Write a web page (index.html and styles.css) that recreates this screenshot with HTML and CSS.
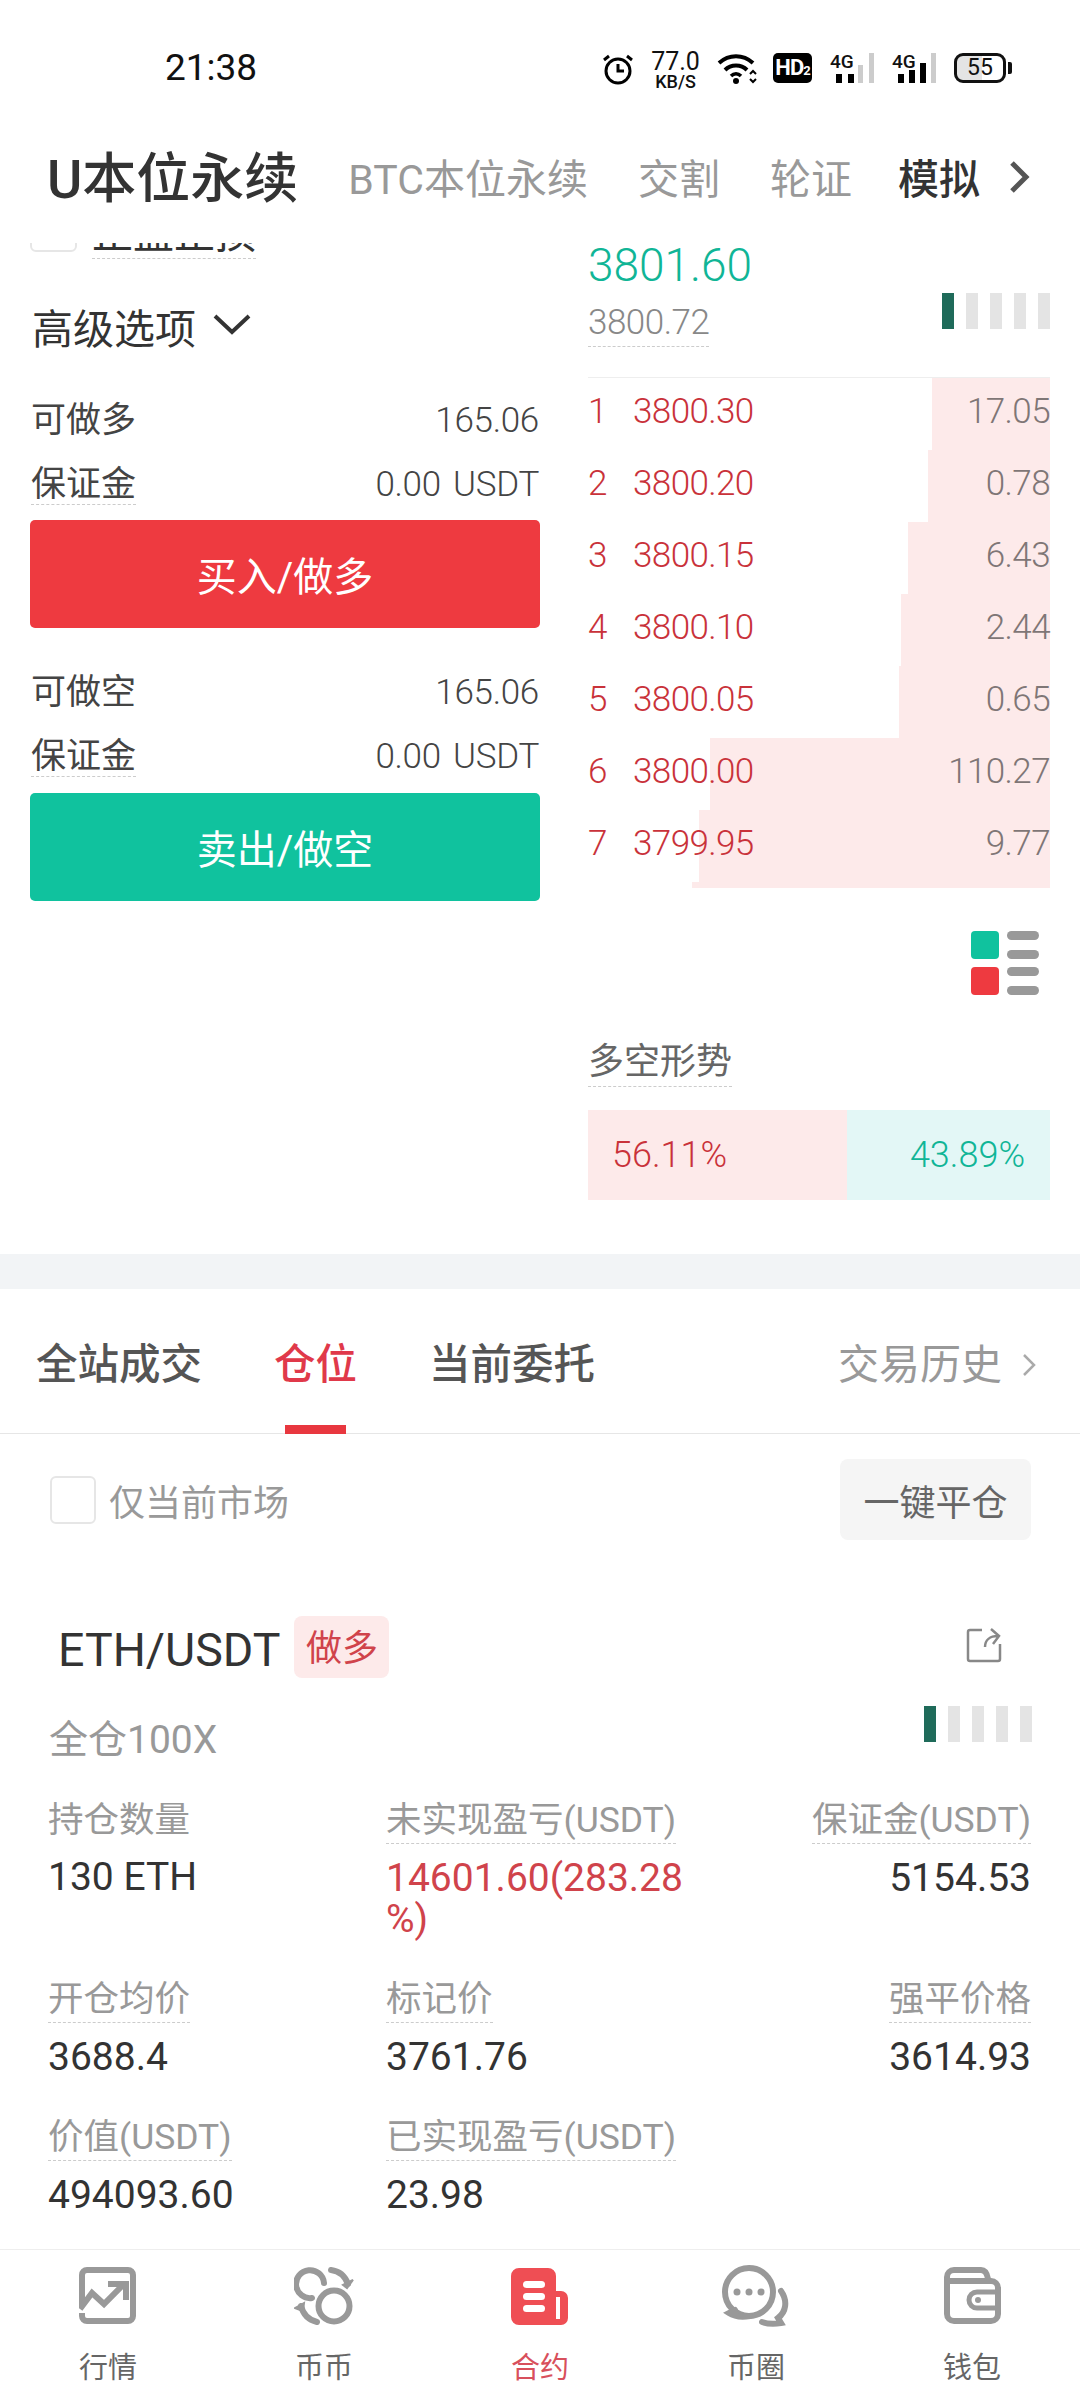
FILE: index.html
```html
<!DOCTYPE html>
<html lang="zh-CN">
<head>
    <meta charset="UTF-8">
    <meta name="viewport" content="width=device-width, initial-scale=1.0">
    <title>U本位永续</title>
    <link rel="stylesheet" href="styles.css">
</head>
<body>
<div class="app">
    <div class="statusbar">
        <span class="clock">21:38</span>
        <div class="status-icons">
            <svg class="ic-alarm" width="32" height="32" viewBox="0 0 32 32">
                <circle cx="16" cy="18" r="12" fill="none" stroke="#000" stroke-width="3"/>
                <path d="M16 11v7h6" fill="none" stroke="#000" stroke-width="3"/>
                <path d="M2 7l5-4M30 7l-5-4" fill="none" stroke="#000" stroke-width="3"/>
            </svg>
            <div class="speed"><span class="speed-num">77.0</span><span class="speed-unit">KB/S</span></div>
            <svg class="ic-wifi" width="42" height="32" viewBox="0 0 42 32">
                <path d="M2 10C12 1 26 1 36 10" fill="none" stroke="#000" stroke-width="4"/>
                <path d="M8 17C14 11 24 11 30 17" fill="none" stroke="#000" stroke-width="4"/>
                <path d="M14 23c3-3 7-3 10 0" fill="none" stroke="#000" stroke-width="3.5"/>
                <circle cx="19" cy="28" r="3" fill="#000"/>
                <path d="M33 21l3-3 3 3M33 26l3 3 3-3" fill="none" stroke="#000" stroke-width="2"/>
            </svg>
            <span class="hd">HD<small>2</small></span>
            <svg class="ic-signal" width="46" height="40" viewBox="0 -8 46 40">
                <text x="0" y="15" class="sig-text">4G</text>
                <rect x="6" y="21" width="6" height="9" fill="#000"/>
                <rect x="18" y="21" width="6" height="9" fill="#000"/>
                <rect x="28" y="12" width="5" height="18" fill="#ccc"/>
                <rect x="39" y="0" width="5" height="30" fill="#ccc"/>
            </svg>
            <svg class="ic-signal" width="46" height="40" viewBox="0 -8 46 40">
                <text x="0" y="15" class="sig-text">4G</text>
                <rect x="6" y="21" width="6" height="9" fill="#000"/>
                <rect x="17" y="17" width="6" height="13" fill="#000"/>
                <rect x="28" y="10" width="6" height="20" fill="#000"/>
                <rect x="39" y="0" width="5" height="30" fill="#ccc"/>
            </svg>
            <div class="battery"><span>55</span></div>
        </div>
    </div>

    <div class="top-tabs">
        <span class="top-tab main">U本位永续</span>
        <span class="top-tab">BTC本位永续</span>
        <span class="top-tab">交割</span>
        <span class="top-tab">轮证</span>
        <span class="top-tab dark">模拟</span>
        <svg class="top-more" width="22" height="34" viewBox="0 0 22 34">
            <path d="M4 3l14 14L4 31" fill="none" stroke="#555" stroke-width="5"/>
        </svg>
    </div>

    <div class="scroll">
        <section class="trade">
            <div class="trade-left">
                <div class="opt-row">
                    <span class="check-small"></span>
                    <span class="dashed opt-text">止盈止损</span>
                </div>
                <div class="advanced">
                    <span>高级选项</span>
                    <svg width="38" height="22" viewBox="0 0 38 22">
                        <path d="M2 3l17 16L36 3" fill="none" stroke="#333" stroke-width="4"/>
                    </svg>
                </div>
                <div class="info-row"><span>可做多</span><span class="num">165.06</span></div>
                <div class="info-row"><span class="dashed">保证金</span><span class="num">0.00 USDT</span></div>
                <button class="action buy">买入/做多</button>
                <div class="info-row second"><span>可做空</span><span class="num">165.06</span></div>
                <div class="info-row"><span class="dashed">保证金</span><span class="num">0.00 USDT</span></div>
                <button class="action sell">卖出/做空</button>
            </div>

            <div class="trade-right">
                <div class="last-price">3801.60</div>
                <div class="mark-row">
                    <span class="dashed mark-price">3800.72</span>
                    <div class="strength"><i class="on"></i><i></i><i></i><i></i><i></i></div>
                </div>
                <div class="book">
                    <div class="book-row"><span class="depth" style="width:118px"></span><span class="idx">1</span><span class="price">3800.30</span><span class="qty">17.05</span></div>
                    <div class="book-row"><span class="depth" style="width:122px"></span><span class="idx">2</span><span class="price">3800.20</span><span class="qty">0.78</span></div>
                    <div class="book-row"><span class="depth" style="width:142px"></span><span class="idx">3</span><span class="price">3800.15</span><span class="qty">6.43</span></div>
                    <div class="book-row"><span class="depth" style="width:149px"></span><span class="idx">4</span><span class="price">3800.10</span><span class="qty">2.44</span></div>
                    <div class="book-row"><span class="depth" style="width:151px"></span><span class="idx">5</span><span class="price">3800.05</span><span class="qty">0.65</span></div>
                    <div class="book-row"><span class="depth" style="width:340px"></span><span class="idx">6</span><span class="price">3800.00</span><span class="qty">110.27</span></div>
                    <div class="book-row"><span class="depth" style="width:351px"></span><span class="idx">7</span><span class="price">3799.95</span><span class="qty">9.77</span></div>
                    <div class="book-tail" style="width:358px"></div>
                </div>
                <div class="legend">
                    <div class="legend-group"><i class="sq green"></i><div class="lines"><b></b><b></b></div></div>
                    <div class="legend-group"><i class="sq red"></i><div class="lines"><b></b><b></b></div></div>
                </div>
                <div class="ratio-title"><span class="dashed">多空形势</span></div>
                <div class="ratio">
                    <span class="ratio-long">56.11%</span>
                    <span class="ratio-short">43.89%</span>
                </div>
            </div>
        </section>

        <div class="band"></div>

        <section class="orders">
            <div class="order-tabs">
                <span class="order-tab">全站成交</span>
                <span class="order-tab active">仓位</span>
                <span class="order-tab">当前委托</span>
                <span class="history">交易历史
                    <svg width="18" height="26" viewBox="0 0 18 26"><path d="M4 3l10 10L4 23" fill="none" stroke="#aaa" stroke-width="2.5"/></svg>
                </span>
            </div>

            <div class="filter">
                <span class="check"></span>
                <span class="filter-text">仅当前市场</span>
                <button class="close-all">一键平仓</button>
            </div>

            <div class="pos-head">
                <span class="symbol">ETH/USDT</span>
                <span class="side-tag">做多</span>
                <svg class="share" width="38" height="36" viewBox="0 0 38 36">
                    <path d="M17 3H5a2 2 0 0 0-2 2v27a2 2 0 0 0 2 2h28a2 2 0 0 0 2-2V17" fill="none" stroke="#888" stroke-width="2.5"/>
                    <path d="M20 20c0-7 5-11 13-11M26 2l8 7-6 8" fill="none" stroke="#888" stroke-width="2.5"/>
                </svg>
            </div>
            <div class="pos-sub">
                <span class="leverage">全仓100X</span>
                <div class="strength"><i class="on"></i><i></i><i></i><i></i><i></i></div>
            </div>

            <div class="pos-grid">
                <div class="cell"><span class="label">持仓数量</span><div class="value">130 ETH</div></div>
                <div class="cell"><span class="dashed label">未实现盈亏(USDT)</span><div class="value pnl">14601.60(283.28<br>%)</div></div>
                <div class="cell right"><span class="dashed label">保证金(USDT)</span><div class="value">5154.53</div></div>

                <div class="cell"><span class="dashed label">开仓均价</span><div class="value">3688.4</div></div>
                <div class="cell"><span class="dashed label">标记价</span><div class="value">3761.76</div></div>
                <div class="cell right"><span class="dashed label">强平价格</span><div class="value">3614.93</div></div>

                <div class="cell"><span class="dashed label">价值(USDT)</span><div class="value">494093.60</div></div>
                <div class="cell"><span class="dashed label">已实现盈亏(USDT)</span><div class="value">23.98</div></div>
            </div>
        </section>
    </div>

    <nav class="bottom-nav">
        <div class="nav-item">
            <svg width="58" height="58" viewBox="0 0 58 58" fill="none" stroke="#999" stroke-width="6">
                <path d="M3 38V8a5 5 0 0 1 5-5h41a5 5 0 0 1 5 5v41a5 5 0 0 1-5 5H8a5 5 0 0 1-5-5v-3"/>
                <path d="M1 42l12-16 12 11 19-19"/>
                <path d="M29 17h18v16"/>
            </svg>
            <span>行情</span>
        </div>
        <div class="nav-item">
            <svg width="60" height="58" viewBox="0 0 60 58" fill="none" stroke="#999" stroke-width="6" stroke-linecap="round">
                <circle cx="40" cy="39" r="15.5"/>
                <path d="M30 16A14 14 0 1 0 18 31"/>
                <path d="M37 3C45 4 51 9 54 17"/>
                <path d="M49 18l10-5-6 8z" stroke-width="2" fill="#999"/>
                <path d="M23 55C15 53 9 47 7 39"/>
                <path d="M1 41l9-5-1 8z" stroke-width="2" fill="#999"/>
            </svg>
            <span>币币</span>
        </div>
        <div class="nav-item active">
            <svg width="58" height="58" viewBox="0 0 58 58">
                <path d="M8 1h29a8 8 0 0 1 8 8v15h5a7 7 0 0 1 7 7v20a7 7 0 0 1-7 7H8a8 8 0 0 1-8-8V9a8 8 0 0 1 8-8z" fill="#ef4e54"/>
                <rect x="12" y="14" width="22" height="7" rx="3.5" fill="#fff"/>
                <rect x="12" y="26" width="22" height="7" rx="3.5" fill="#fff"/>
                <rect x="12" y="38" width="22" height="7" rx="3.5" fill="#fff"/>
                <rect x="45" y="30" width="4" height="22" fill="#fff"/>
            </svg>
            <span>合约</span>
        </div>
        <div class="nav-item">
            <svg class="nav-chat" width="68" height="62" viewBox="0 0 68 62" fill="none" stroke="#999" stroke-width="6" stroke-linecap="round">
                <circle cx="27" cy="27" r="24"/>
                <path d="M13 45l-6 3c6 4 15 4 21 3"/>
                <circle cx="15" cy="27" r="3.5" fill="#999" stroke="none"/>
                <circle cx="27" cy="27" r="3.5" fill="#999" stroke="none"/>
                <circle cx="39" cy="27" r="3.5" fill="#999" stroke="none"/>
                <path d="M59 26c7 10 5 21-3 27l3 5c-6 1-13 1-19-1"/>
            </svg>
            <span>币圈</span>
        </div>
        <div class="nav-item">
            <svg width="57" height="58" viewBox="0 0 57 58" fill="none" stroke="#999" stroke-width="6">
                <path d="M3 14h44a7 7 0 0 1 7 7v26a7 7 0 0 1-7 7H10a7 7 0 0 1-7-7V10a7 7 0 0 1 7-7h27c4 0 6 3 7 9"/>
                <path d="M53 25H33a8 8 0 0 0 0 16h20" stroke-width="5"/>
                <circle cx="34" cy="33" r="3" fill="#999" stroke="none"/>
            </svg>
            <span>钱包</span>
        </div>
    </nav>
</div>
</body>
</html>
```

FILE: styles.css
```css
* {
    box-sizing: border-box;
}

body {
    margin: 0;
    background-color: #fff;
    font-family: Roboto, "Noto Sans CJK SC", sans-serif;
    color: #333;
}

.app {
    width: 1080px;
    height: 2400px;
    display: flex;
    flex-direction: column;
    overflow: hidden;
}

.dashed {
    display: inline-block;
    border-bottom: 1px dashed #ccc;
}

/* status bar */
.statusbar {
    height: 130px;
    flex-shrink: 0;
    display: flex;
    align-items: flex-start;
    padding: 50px 68px 0 165px;
}

.clock {
    font-size: 37px;
    line-height: 36px;
    color: #111;
}

.status-icons {
    margin-left: auto;
    display: flex;
    align-items: flex-start;
}

.ic-alarm {
    margin: 3px 18px 0 0;
}

.speed {
    width: 47px;
    margin-right: 18px;
    display: flex;
    flex-direction: column;
    align-items: center;
    color: #111;
}

.speed-num {
    font-size: 25px;
    line-height: 23px;
}

.speed-unit {
    font-size: 18px;
    font-weight: 500;
    line-height: 18px;
}

.ic-wifi {
    margin: 3px 14px 0 0;
}

.hd {
    width: 39px;
    height: 30px;
    margin: 3px 18px 0 0;
    background-color: #000;
    border-radius: 5px;
    color: #fff;
    font-size: 22px;
    font-weight: 700;
    line-height: 30px;
    text-align: center;
    letter-spacing: -1px;
}

.hd small {
    font-size: 13px;
}

.ic-signal {
    margin: -5px 16px 0 0;
}

.sig-text {
    font-size: 19px;
    font-weight: 500;
    fill: #111;
    font-family: Roboto, sans-serif;
}

.battery {
    position: relative;
    width: 52px;
    height: 30px;
    margin: 3px 6px 0 0;
    border: 3px solid #111;
    border-radius: 9px;
    background: linear-gradient(90deg, #e4e4e4 55%, #fff 55%);
    font-size: 23px;
    line-height: 24px;
    text-align: center;
    color: #111;
}

.battery::after {
    content: "";
    position: absolute;
    right: -9px;
    top: 6px;
    width: 4px;
    height: 12px;
    background-color: #111;
    border-radius: 0 2px 2px 0;
}

/* top tabs */
.top-tabs {
    height: 113px;
    flex-shrink: 0;
    display: flex;
    align-items: center;
    gap: 50px;
    padding: 0 0 14px 47px;
}

.top-tab {
    font-size: 41px;
    line-height: 60px;
    color: #999;
}

.top-tab.main {
    font-size: 54px;
    font-weight: 500;
    color: #333;
}

.top-tab.dark {
    margin-left: -4px;
    color: #333;
    font-weight: 500;
}

.top-more {
    margin: -6px 0 0 -22px;
}

.scroll {
    flex: 1;
}

/* order form + book */
.trade {
    display: flex;
}

.trade-left {
    width: 510px;
    margin-left: 30px;
    overflow: hidden;
}

.opt-row {
    display: flex;
    gap: 15px;
    height: 49px;
    margin-top: -33px;
}

.check-small {
    width: 47px;
    height: 42px;
    border: 2px solid #e6e6e6;
    border-radius: 6px;
}

.opt-text {
    font-size: 41px;
    line-height: 48px;
    height: 49px;
    color: #333;
}

.advanced {
    display: flex;
    align-items: center;
    gap: 17px;
    height: 60px;
    margin-top: 41px;
    font-size: 41px;
    line-height: 60px;
    padding-left: 2px;
}

.advanced svg {
    margin-top: -12px;
}

.info-row {
    display: flex;
    justify-content: space-between;
    align-items: center;
    height: 64px;
    font-size: 35px;
    line-height: 38px;
    padding: 0 0 0 1px;
    color: #444;
}

.advanced + .info-row {
    margin-top: 29px;
}

.info-row.second {
    margin-top: 33px;
}

.num {
    font-size: 35px;
    font-weight: 300;
    letter-spacing: -0.3px;
    word-spacing: 4px;
    padding-right: 1px;
    color: #444;
}

.action {
    display: block;
    width: 510px;
    height: 108px;
    border: none;
    border-radius: 5px;
    color: #fff;
    font-family: inherit;
    font-size: 40px;
}

.buy {
    margin-top: 3px;
    background-color: #ee3a40;
}

.sell {
    margin-top: 4px;
    background-color: #10c29e;
}

.trade-right {
    width: 462px;
    margin-left: 48px;
}

.last-price {
    font-size: 46px;
    font-weight: 300;
    line-height: 44px;
    color: #10b596;
}

.mark-row {
    display: flex;
    justify-content: space-between;
    align-items: flex-start;
    margin-top: 6px;
}

.mark-price {
    margin-top: 7px;
    font-size: 35px;
    font-weight: 300;
    line-height: 46px;
    letter-spacing: -0.5px;
    color: #888;
}

.strength {
    display: flex;
    gap: 12px;
}

.strength i {
    width: 12px;
    height: 36px;
    background-color: #e4e4e4;
}

.strength i.on {
    background-color: #1f6b5a;
}

.book {
    margin-top: 30px;
    border-top: 1px solid #eee;
}

.book-row {
    position: relative;
    height: 72px;
    display: flex;
    align-items: center;
    padding-bottom: 5px;
    font-size: 35px;
    font-weight: 300;
    letter-spacing: -0.6px;
}

.depth {
    position: absolute;
    top: 0;
    right: 0;
    bottom: 0;
    background-color: #fdeaea;
}

.idx,
.price,
.qty {
    position: relative;
}

.idx {
    width: 45px;
    color: #c9323a;
}

.price {
    color: #c9323a;
}

.qty {
    margin-left: auto;
    color: #7f7676;
}

.book-tail {
    height: 6px;
    margin-left: auto;
    background-color: #fdeaea;
}

.legend {
    width: 68px;
    margin: 43px 11px 0 auto;
}

.legend-group {
    display: flex;
    justify-content: space-between;
    height: 28px;
    margin-bottom: 8px;
}

.sq {
    width: 28px;
    height: 28px;
    border-radius: 4px;
}

.sq.green {
    background-color: #10c29e;
}

.sq.red {
    background-color: #ee3a40;
}

.lines {
    display: flex;
    flex-direction: column;
    justify-content: space-between;
}

.lines b {
    display: block;
    width: 32px;
    height: 9px;
    border-radius: 5px;
    background-color: #999;
}

.ratio-title {
    margin-top: 47px;
    font-size: 36px;
    line-height: 40px;
    color: #666;
}

.ratio-title .dashed {
    padding-bottom: 4px;
}

.ratio {
    display: flex;
    height: 90px;
    margin-top: 23px;
    margin-bottom: 54px;
    font-size: 36px;
    font-weight: 300;
    line-height: 90px;
}

.ratio-long {
    width: 259px;
    padding-left: 24px;
    background-color: #fdeaea;
    color: #c9323a;
}

.ratio-short {
    flex: 1;
    padding-right: 25px;
    text-align: right;
    background-color: #e3f7f6;
    color: #10b596;
}

.band {
    height: 35px;
    background-color: #f2f4f6;
}

/* positions */
.order-tabs {
    height: 145px;
    display: flex;
    align-items: flex-start;
    gap: 72px;
    padding: 50px 42px 0 36px;
    border-bottom: 1px solid #e6e6e6;
}

.order-tab {
    position: relative;
    font-size: 41.5px;
    font-weight: 500;
    line-height: 52px;
    color: #555;
}

.order-tab.active {
    color: #e0394a;
}

.order-tab.active::after {
    content: "";
    position: absolute;
    left: 11px;
    right: 11px;
    top: 86px;
    height: 9px;
    background-color: #e8373f;
}

.history {
    margin-left: auto;
    display: flex;
    align-items: center;
    gap: 18px;
    font-size: 41px;
    line-height: 52px;
    color: #999;
}

.filter {
    display: flex;
    align-items: center;
    padding: 25px 49px 0 50px;
}

.check {
    width: 46px;
    height: 48px;
    border: 2px solid #e6e6e6;
    border-radius: 6px;
}

.filter-text {
    margin-left: 13px;
    font-size: 36px;
    color: #999;
}

.close-all {
    width: 191px;
    height: 81px;
    margin-left: auto;
    border: none;
    border-radius: 8px;
    background-color: #f5f5f5;
    color: #666;
    font-family: inherit;
    font-size: 36px;
}

.pos-head {
    display: flex;
    align-items: center;
    height: 62px;
    margin-top: 76px;
    padding: 0 77px 0 58px;
}

.symbol {
    margin-top: 6px;
    font-size: 46.5px;
    color: #333;
}

.side-tag {
    width: 95px;
    height: 62px;
    margin-left: 14px;
    border-radius: 8px;
    background-color: #fdeaea;
    color: #d0434b;
    font-size: 36px;
    line-height: 66px;
    text-align: center;
}

.share {
    margin-left: auto;
    margin-top: -4px;
}

.pos-sub {
    display: flex;
    justify-content: space-between;
    align-items: flex-start;
    margin-top: 28px;
    padding: 0 48px 0 49px;
}

.leverage {
    margin-top: 8px;
    font-size: 39px;
    line-height: 52px;
    color: #999;
}

.pos-grid {
    display: grid;
    grid-template-columns: 338px 310px 1fr;
    row-gap: 37px;
    margin-top: 32px;
    padding: 0 49px 0 48px;
}

.cell.right {
    text-align: right;
}

.label {
    display: inline-block;
    font-size: 35.5px;
    line-height: 44px;
    padding-bottom: 1px;
    color: #999;
}

.value {
    margin-top: 14px;
    font-size: 39px;
    line-height: 41px;
    color: #333;
}

.value.pnl {
    color: #d0434b;
}

/* bottom navigation */
.bottom-nav {
    height: 151px;
    flex-shrink: 0;
    display: flex;
    border-top: 1px solid #eee;
}

.nav-item {
    flex: 1;
    display: flex;
    flex-direction: column;
    align-items: center;
    padding-top: 17px;
    font-size: 29px;
    line-height: 40px;
    color: #666;
}

.nav-chat {
    margin: -2px 0 -2px;
}

.nav-item span {
    margin-top: 23px;
}

.nav-item.active {
    color: #d8505c;
}
```
